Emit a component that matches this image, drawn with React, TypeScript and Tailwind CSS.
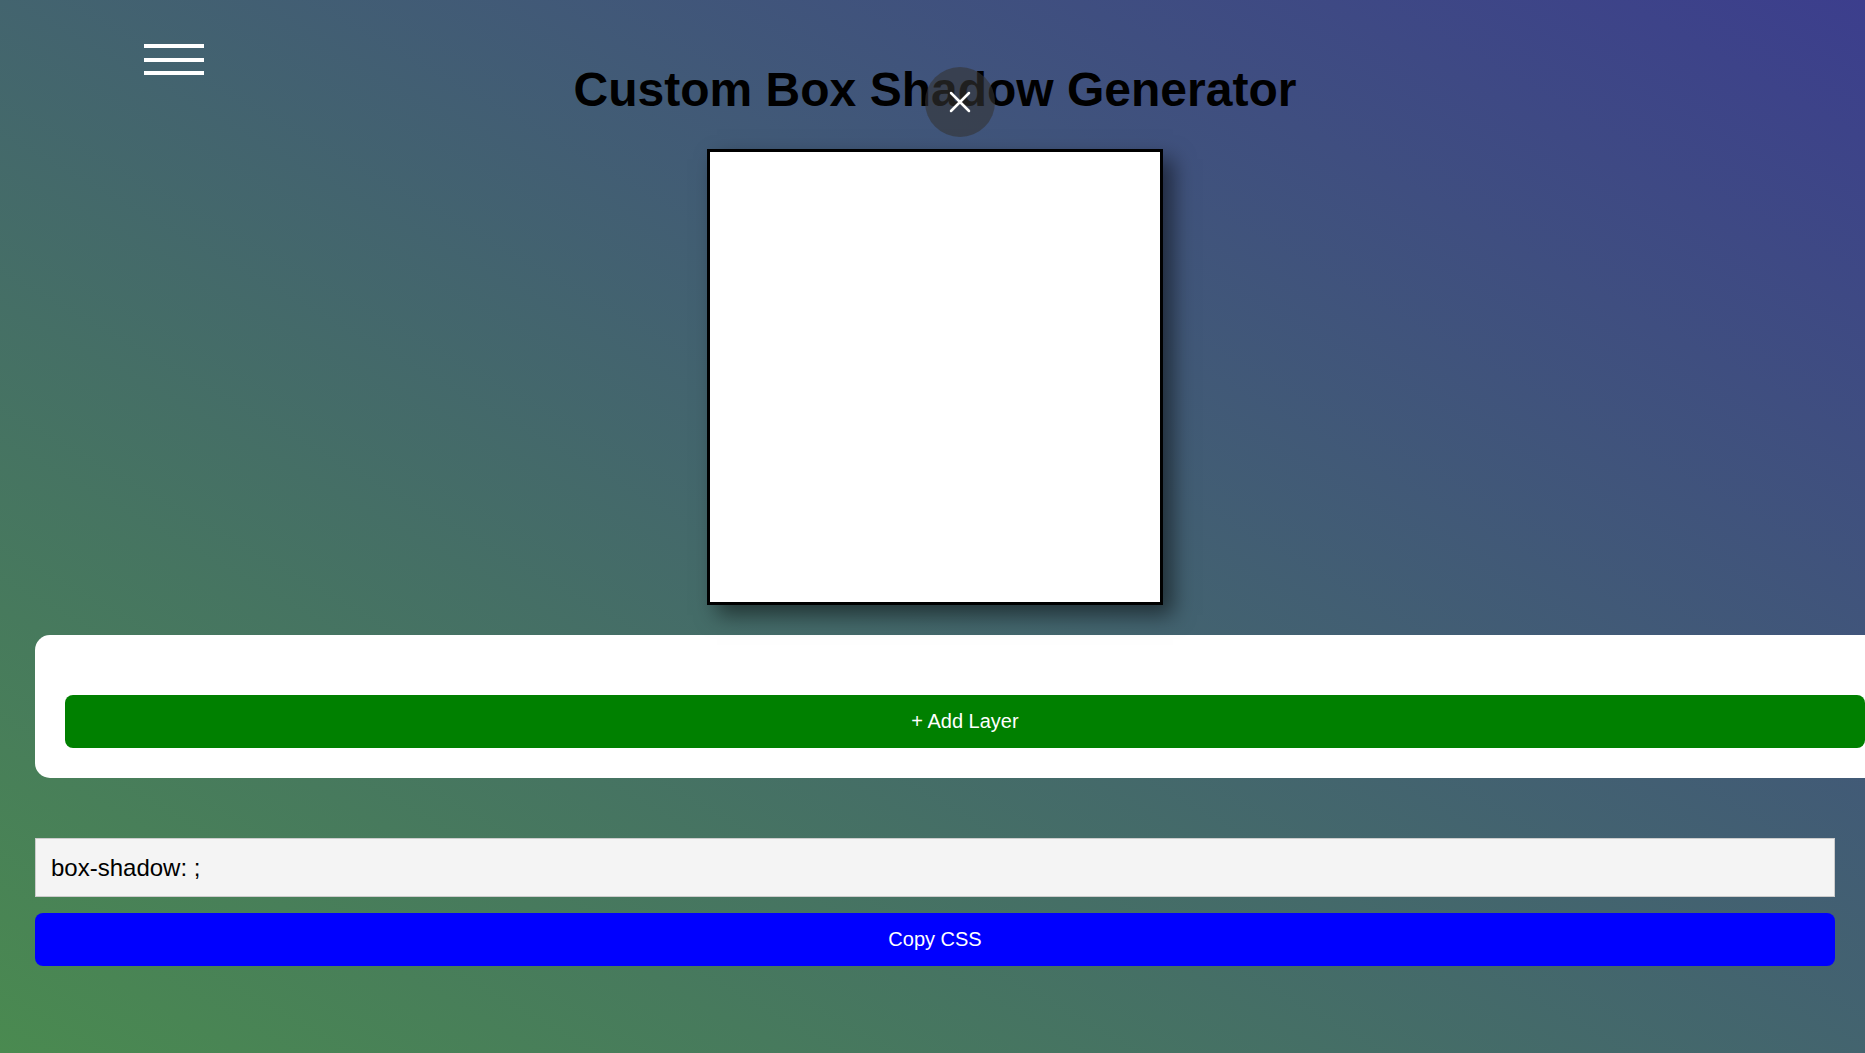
import { useState } from "react";

export default function App() {
    const [layers] = useState<string[]>([]);
    const css = `box-shadow: ${layers.join(", ")};`;

    return (
        <div className="relative min-h-screen w-full overflow-hidden bg-[linear-gradient(to_top_right,#4a8a50,#3c3e8d)] font-['Liberation_Sans',Arial,sans-serif]">
            {/* Menu toggle */}
            <button className="absolute left-[144px] top-[44px] flex flex-col gap-[9.5px]">
                <span className="block h-[4px] w-[60px] bg-white" />
                <span className="block h-[4px] w-[60px] bg-white" />
                <span className="block h-[4px] w-[60px] bg-white" />
            </button>

            <div className="pl-[35px] pr-[30px] pt-[30px] pb-[40px]">
                <h1 className="my-[32px] text-center text-[48px] font-bold leading-[normal] text-black">
                    Custom Box Shadow Generator
                </h1>

                {/* Preview */}
                <div className="flex justify-center">
                    <div className="h-[456px] w-[456px] border-[3px] border-black bg-white shadow-[10px_10px_20px_rgba(0,0,0,0.5)]" />
                </div>

                {/* Layers */}
                <div className="mt-[30px] box-content w-full rounded-[15px] bg-white p-[30px]">
                    <div className="h-[30px]" />
                    <button className="w-full rounded-[8px] bg-[#008000] py-[15px] text-[20px] leading-[23px] text-white">
                        + Add Layer
                    </button>
                </div>

                {/* Output */}
                <div className="mt-[60px] border border-[#cccccc] bg-[#f4f4f4] p-[15px] text-[24px] leading-[27px] text-black">
                    {css}
                </div>
                <button className="mt-[16px] w-full rounded-[8px] bg-[#0000ff] py-[15px] text-[20px] leading-[23px] text-white">
                    Copy CSS
                </button>
            </div>

            {/* Close sidebar */}
            <button className="absolute left-[925px] top-[67px] flex h-[70px] w-[70px] items-center justify-center rounded-full bg-[rgba(51,51,51,0.6)]">
                <svg width="22" height="22" viewBox="0 0 22 22" fill="none" stroke="white" strokeWidth="2.5" strokeLinecap="round">
                    <path d="M2 2L20 20M20 2L2 20" />
                </svg>
            </button>
        </div>
    );
}
